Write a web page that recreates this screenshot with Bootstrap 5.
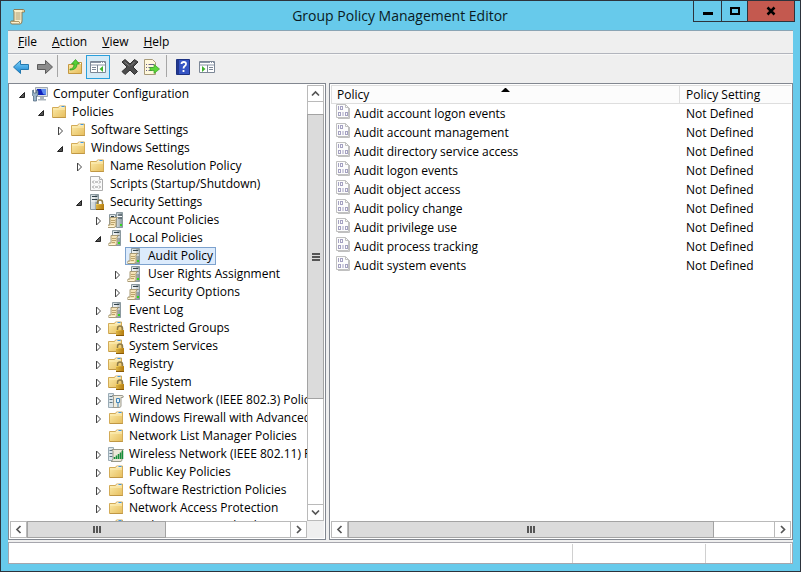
<!DOCTYPE html>
<html lang="en">
<head>
<meta charset="utf-8">
<meta name="viewport" content="width=device-width, initial-scale=1">
<title>Group Policy Management Editor</title>
<link href="https://cdn.jsdelivr.net/npm/bootstrap@5.3.0/dist/css/bootstrap.min.css" rel="stylesheet">
<style>
body{font:12px/18px "Open Sans","Noto Sans",sans-serif;color:#000}
svg{display:block;flex:none}
button{font:inherit;color:inherit}
.win{background:#67caeb;border:1px solid #2d333c;padding:0 7px 7px}
.titlebar{height:29px;padding-left:2px}
.titlebar h1{font-size:14px;line-height:29px;color:#0a1a22;padding-left:81px}
.caps{height:21px;margin-right:-2px;border:1px solid #2d333c;border-top:0}
.caps button{border:0;border-right:1px solid #2d333c;background:none;padding:0;width:28px}
.caps .max{width:26px}
.caps .quit{width:46px;background:#c4594f;border-right:0}
.client{background:#efefef;border-top:1px solid #8aa4b4}
.menus{height:23px;border-bottom:1px solid #b2b5bd;padding-left:3px;gap:1px}
.menus button{border:0;background:none;padding:0 7px;line-height:22px}
.tools{height:29px;border-top:1px solid #f8f8f8;padding-left:1px}
.tools button{width:24px;height:24px;border:1px solid transparent;background:none;padding:0}
.tools button.on{border-color:#2a9fdb;background:#d5eaf6}
.tools i{width:1px;height:22px;background:#a6a6a6}
.split{gap:3px}
.pane{border:1px solid #828790;background:#fff;padding:1px}
.side{flex:0 0 318px;min-width:0}
.tree{min-width:0}
.tree li{height:18px;padding-left:5px;white-space:nowrap}
.tree button{width:15px;height:18px;border:0;background:none;padding:0}
.tree a{color:#000;text-decoration:none;border:1px solid transparent;height:18px;padding:0 2px 0 1px;line-height:16px;gap:5px}
.tree a.sel{border-color:#7da2ce;background:#dcebfc}
.tree .leaf{padding-left:20px}
.tree .d1{margin-left:19px}.tree .d2{margin-left:38px}.tree .d3{margin-left:57px}.tree .d4{margin-left:76px}.tree .d5{margin-left:95px}
.bar{background:#fff;border:1px solid #bababa}
.bar button{border:0;background:#fff;padding:0;flex:0 0 16px}
.vbar{width:17px}
.hbar{height:17px}
.hbar button:first-child{border-right:1px solid #bababa}
.hbar button:last-child{border-left:1px solid #bababa}
.vbar button:first-child{border-bottom:1px solid #bababa}
.vbar button:last-child{border-top:1px solid #bababa}
.corner{background:#efefef}
.thumb{background:#dbdbdb;border:1px solid #a3a3a3}
.vbar .thumb{height:71%;margin:0 -1px}
.hbar .thumb{margin:-1px 0}
.vbar .lead-gap{height:12px}
.side .hbar .thumb{width:53%}
.main .hbar .thumb{width:86%}
.plist{table-layout:fixed;border-collapse:separate;border-spacing:0}
.plist th{font-weight:400;height:19px;line-height:17px;padding:0 5px;background:#fcfcfc;border:1px solid #dedede;position:relative}
.plist th+th{border-left:0;border-right:0;width:111px}
.plist td{height:19px;line-height:19px;padding:0 5px}
.plist td+td,.plist th+th{padding-left:6px}
.sorted{position:absolute;left:50%;top:2px;margin-left:-5px}
.status{height:22px;background:#fff;border:1px solid #a6a6ad;margin-top:2px;padding:1px 1px 0 0}
.status div{border-right:1px solid #d0d0d0}
.status .cell2{width:133px}.status .cell3{width:85px}
</style>
<script src="https://cdn.jsdelivr.net/npm/bootstrap@5.3.0/dist/js/bootstrap.bundle.min.js"></script>
</head>
<body>
<svg width="0" height="0" class="position-absolute" aria-hidden="true">
<defs>
<linearGradient id="gf" x1="0" y1="0" x2="1" y2="1"><stop offset="0" stop-color="#fcecab"/><stop offset="1" stop-color="#e6bd5c"/></linearGradient>
<linearGradient id="gs" x1="0" x2="1"><stop offset="0" stop-color="#d5dde0"/><stop offset="1" stop-color="#84939a"/></linearGradient>
<linearGradient id="gb" x1="0" y1="0" x2="0" y2="1"><stop offset="0" stop-color="#7fd4fa"/><stop offset="1" stop-color="#1580cf"/></linearGradient>
<linearGradient id="gl" x1="0" x2="1"><stop offset="0" stop-color="#f7d65e"/><stop offset="1" stop-color="#b9800f"/></linearGradient>
</defs>
<symbol id="open" viewBox="0 0 15 18"><path d="M9.5 7.5v5h-5z" fill="#555" stroke="#222"/></symbol>
<symbol id="shut" viewBox="0 0 15 18"><path d="M5.500 6v8L9.500 10z" fill="#fff" stroke="#444"/></symbol>
<symbol id="folder" viewBox="0 0 16 16"><path d="M1.500 3.500h6l1-1.500h6v11.500h-13z" fill="url(#gf)" stroke="#d3ab57"/><path d="M8 3.500l1-1h4.500v1z" fill="#fff"/><path d="M10.500 2h3v1h-3z" fill="#3f97e0"/><path d="M2 5h12" stroke="#fff2bd"/><path d="M2 13.500h13" stroke="#b48a38" opacity=".6"/></symbol>
<symbol id="lock" viewBox="0 0 16 16"><path d="M9.500 11V8.500a2.500 2.500 0 015 0V11" fill="none" stroke="#8f7c48" stroke-width="1.500"/><path d="M8 10h8v6H8z" fill="url(#gl)"/><path d="M8 12h8M8 14h8" stroke="#a87311" opacity=".7"/><path d="M8 15.500h8" stroke="#8a5a08"/></symbol>
<symbol id="server" viewBox="0 0 16 16"><path d="M4.500.5h8v15h-8z" fill="url(#gs)" stroke="#8b999f"/><path d="M5 1h4v14H5z" fill="#e3e9ec" opacity=".6"/><path d="M6 2.500h5M6 5.500h5" stroke="#34434b"/><path d="M5 4h7M5 7h7" stroke="#fff"/><path d="M10 12h2v2h-2z" fill="#32d91e"/></symbol>
<symbol id="scrollmini" viewBox="0 0 16 16"><path d="M3 5.500h7.500L9 7v6.500q0 2-2 2H.8L1 13h2z" fill="#f6e4b8" stroke="#a89a76"/><path d="M4 8.500h4M4 10.500h4M4 12.500h3" stroke="#bba36c"/><path d="M1 14.500h6" stroke="#fff6d8"/></symbol>
<symbol id="srvscroll" viewBox="0 0 16 16"><use href="#server"/><use href="#scrollmini"/></symbol>
<symbol id="account" viewBox="0 0 16 16"><path d="M1.500 2.500h6v12h-6z" fill="#dde4e7" stroke="#87959c"/><path d="M8.500.5h6v15h-6z" fill="url(#gs)" stroke="#8b999f"/><path d="M3 4.500h3M3 6.500h3M10 3h4M10 6h4" stroke="#34434b"/><path d="M9 4.500h5" stroke="#fff"/><path d="M12 12h2v2h-2z" fill="#32d91e"/><use href="#scrollmini" x="-1"/></symbol>
<symbol id="srvlock" viewBox="0 0 16 16"><use href="#server" x="-3"/><use href="#lock" x="-1"/></symbol>
<symbol id="flock" viewBox="0 0 16 16"><use href="#folder" x="-1"/><use href="#lock"/></symbol>
<symbol id="script" viewBox="0 0 16 16"><path d="M1.500.5h9l3 3v11h-12z" fill="#fafafa" stroke="#adadad"/><path d="M10.500.5v3h3" fill="#eee" stroke="#adadad"/><path d="M5 4.500L3.500 6 5 7.500M10 4.500L11.500 6 10 7.500M6 6h3M5 9.500L3.500 11 5 12.500M10 9.500l1.500 1.500-1.500 1.500M6 11h3" fill="none" stroke="#777" stroke-width=".8"/></symbol>
<symbol id="wired" viewBox="0 0 16 16"><path d="M.5 1.500h5v14h-5z" fill="#dce6eb" stroke="#9aabb5"/><path d="M1.500 4.500h3M1.500 7.500h3M1.500 10.500h3" stroke="#5a7380"/><path d="M4 3.500h10q2 0 1 2h-2v9q-1 1-2 1H4.500q1.500-1 1-2V5Q5 4 4 3.500z" fill="#f1ecdc" stroke="#9b9a90"/><path d="M8.500 6.500h3v4h-3zM10 10.500V15" fill="#e4f3fc" stroke="#4385b8"/></symbol>
<symbol id="wifi" viewBox="0 0 16 16"><path d="M.5 1.500h5v13h-5z" fill="#dce6eb" stroke="#9aabb5"/><path d="M1.500 4.500h3M1.500 7.500h3M1.500 10.500h3" stroke="#5a7380"/><path d="M4 3.500h11.500L14 5v9.500q-1 1-2 1H3q2-1 2-3V5z" fill="#ede8d9" stroke="#999989"/><path d="M6.500 13v-2M8.500 13v-3.500M10.500 13V8M12.500 13V6.500M14.500 13V4.500" stroke="#168e39" stroke-width="1.500"/></symbol>
<symbol id="comp" viewBox="0 0 16 16"><path d="M3.500 1.500h12v9h-12z" fill="#dbe1e6" stroke="#a0a9b1"/><path d="M5 3h9v6H5z" fill="#1022bd"/><path d="M9 3h5v6l-3-1z" fill="#5e8cf0"/><path d="M8 11h4v2H8zM6 13h8v1.500H6z" fill="#acb5bd"/><path d="M0 5v4l1.500 1v5h3v-5L6 9V5L4.500 4v3h-3V4z" fill="#9cb4c8" stroke="#465f75" stroke-width=".7"/></symbol>
<symbol id="digits" viewBox="0 0 14 16"><path d="M.5.5h9l3 3v10H.5z" fill="#fcfcfc" stroke="#c0c0c0"/><path d="M9.500.5v3H13M13.500 4v10.500H2" fill="none" stroke="#c0c0c0"/><g fill="none" stroke="#a5a2c2"><path d="M2.500 2v4"/><rect x="4.500" y="2.500" width="2" height="3"/><rect x="2.500" y="8.500" width="2" height="3"/><path d="M7 8v4"/><rect x="9.500" y="8.500" width="2" height="3"/></g></symbol>
<symbol id="cl" viewBox="0 0 15 15"><path d="M9.500 4L6 7.500 9.500 11" fill="none" stroke="#555" stroke-width="1.700"/></symbol>
<symbol id="cr" viewBox="0 0 15 15"><path d="M6 4l3.500 3.500L6 11" fill="none" stroke="#555" stroke-width="1.700"/></symbol>
<symbol id="arr" viewBox="0 0 18 16"><path d="M1.500 8L8.500 1.500v4h8v5h-8v4z"/></symbol>
<symbol id="panel" viewBox="0 0 16 16"><path d="M.5 2.500h15v11H.5z" fill="#fff" stroke="#7c8796"/><path d="M1 3.500h14M1 6h14" stroke="#8994a5"/><path d="M11 3.500h1M13 3.500h1" stroke="#fff"/></symbol>
</svg>

<div class="win vh-100 d-flex flex-column">
<header class="titlebar d-flex position-relative">
<svg class="mt-2" width="16" height="16" viewBox="0 0 16 16" aria-hidden="true"><path d="M4 .5h9q2 0 1.500 2.500H12v9q0 3-2 3H1.500q-1.500-1-.5-3h3V3q-1-2 0-2.500z" fill="#fdf1cd" stroke="#8c7a53"/><path d="M5.500 4h5M5.500 6h5M5.500 8h5M5.500 10h5" stroke="#a99a72"/><path d="M2 12.500h7l1 2" fill="none" stroke="#b09a68"/><path d="M12 1v2h2.500" fill="#e0c688"/></svg>
<h1 class="m-0 flex-fill text-center">Group Policy Management Editor</h1>
<div class="caps d-flex">
<button aria-label="Minimize"><svg width="28" height="20"><path d="M9 11h10v3H9z"/></svg></button>
<button class="max" aria-label="Maximize"><svg width="25" height="20"><path d="M9 7h8v6H9z" fill="none" stroke="#000" stroke-width="2"/></svg></button>
<button class="quit" aria-label="Close"><svg width="46" height="20"><path d="M19.500 6.500l7 7M26.500 6.500l-7 7" stroke="#000" stroke-width="2.500"/></svg></button>
</div>
</header>

<main class="client d-flex flex-column flex-fill overflow-hidden">
<nav class="menus d-flex flex-shrink-0"><button><u>F</u>ile</button><button><u>A</u>ction</button><button><u>V</u>iew</button><button><u>H</u>elp</button></nav>
<div class="tools d-flex align-items-start flex-shrink-0" role="toolbar" aria-label="Tools">
<button aria-label="Back"><svg width="18" height="22" viewBox="0 -3 18 22" class="mx-auto"><use href="#arr" width="18" height="16" fill="url(#gb)" stroke="#2478ae"/></svg></button>
<button aria-label="Forward"><svg width="18" height="22" viewBox="0 -3 18 22" class="mx-auto"><g transform="translate(18) scale(-1 1)"><use href="#arr" width="18" height="16" fill="#8b8b8b" stroke="#5b5b5b"/></g></svg></button>
<i></i>
<button class="ms-1" aria-label="Up one level"><svg class="ms-1" width="16" height="22" viewBox="0 -3 16 22"><path d="M1.500 5.500h5l1-2h7v11h-13z" fill="url(#gf)" stroke="#c49740"/><path d="M9 4h5v1H9z" fill="#fff"/><path d="M3 10q4 0 4-5H4.500L8.500.5l4 4.500H10q0 6-7 6z" fill="#57cf35" stroke="#24921a" stroke-width=".7"/></svg></button>
<button class="on" aria-label="Console tree"><svg class="mx-auto" width="16" height="22" viewBox="0 -3 16 22"><use href="#panel" width="16" height="16"/><path d="M7.500 6v7M2 8.500h4M2 10.500h4" stroke="#7c8796"/><path d="M13 7v6L9.500 10z" fill="#3fb22d"/></svg></button>
<button class="ms-2" aria-label="Delete"><svg class="mx-auto" width="18" height="22" viewBox="0 -3 18 22"><path d="M1 3l3-2.500 5 4.500 4.500-4.500L17 3l-5 5 4.500 4.500-3 3L9 11l-5 4.500-3-3L6 8z" fill="#4d4d4d" stroke="#303030"/><path d="M3.500 3l5 4M13.500 3L10 6.500" stroke="#858585"/></svg></button>
<button aria-label="Export list"><svg width="17" height="22" viewBox="0 -3 17 22"><path d="M1.500.5h8l3 3v12h-11z" fill="#fff8dc" stroke="#a79a79"/><path d="M3 5.500h1M3 8.500h1M3 11.500h1M5.500 5.500H11M5.500 8.500H10M5.500 11.500H9" stroke="#68608c"/><path d="M7 8.500h4v-3l5.500 4.500-5.500 4.500v-3H7z" fill="#5dd63a" stroke="#36a222" stroke-width=".7"/></svg></button>
<i></i>
<button class="ms-1" aria-label="Help"><svg class="mx-auto" width="14" height="22" viewBox="0 -3 14 22"><path d="M.5.5h13v15H.5z" fill="#3655c4" stroke="#1d3282"/><path d="M1 1h2v14H1z" fill="#22388f"/><path d="M5.500 5q0-2 2.300-2T10 5q0 1.200-1.200 2T7.500 9.500M7.500 11v2" fill="none" stroke="#fff" stroke-width="1.800"/></svg></button>
<button aria-label="Action pane"><svg class="mx-auto" width="16" height="22" viewBox="0 -3 16 22"><use href="#panel" width="16" height="16"/><path d="M8.500 6v7M10 8.500h4M10 10.500h4" stroke="#7c8796"/><path d="M3 7v6l3.500-3z" fill="#3fb22d"/></svg></button>
</div>

<div class="split d-flex flex-fill overflow-hidden">
<section class="pane side d-flex flex-column" aria-label="Console tree">
<div class="d-flex flex-fill overflow-hidden">
<ul class="tree list-unstyled m-0 flex-fill overflow-hidden" id="tree"></ul>
<div class="bar vbar d-flex flex-column flex-shrink-0">
<button aria-label="Scroll up"><svg width="15" height="15"><path d="M4 9.500L7.500 6 11 9.500" fill="none" stroke="#555" stroke-width="1.700"/></svg></button>
<div class="flex-fill"><div class="lead-gap"></div><div class="thumb d-flex align-items-center justify-content-center"><svg width="8" height="8"><path d="M0 1h8M0 4h8M0 7h8" stroke="#555" stroke-width="2"/></svg></div></div>
<button aria-label="Scroll down"><svg width="15" height="15"><path d="M4 5.500L7.500 9 11 5.500" fill="none" stroke="#555" stroke-width="1.700"/></svg></button>
</div>
</div>
<div class="d-flex flex-shrink-0"><div class="bar hbar d-flex flex-fill">
<button aria-label="Scroll left"><svg width="15" height="15"><use href="#cl"/></svg></button>
<div class="d-flex flex-fill"><div class="thumb d-flex align-items-center justify-content-center"><svg width="8" height="7"><path d="M1 0v7M4 0v7M7 0v7" stroke="#555" stroke-width="2"/></svg></div></div>
<button aria-label="Scroll right"><svg width="15" height="15"><use href="#cr"/></svg></button>
</div><div class="vbar corner"></div></div>
</section>

<section class="pane main d-flex flex-column flex-fill overflow-hidden" aria-label="Policies">
<div class="flex-fill overflow-hidden">
<table class="plist w-100"><thead><tr><th scope="col">Policy<svg class="sorted" width="9" height="5"><path d="M4 0h1l4 4H0z"/></svg></th><th scope="col">Policy Setting</th></tr></thead><tbody id="rows"></tbody></table>
</div>
<div class="bar hbar d-flex flex-shrink-0">
<button aria-label="Scroll left"><svg width="15" height="15"><use href="#cl"/></svg></button>
<div class="d-flex flex-fill"><div class="thumb d-flex align-items-center justify-content-center"><svg width="8" height="7"><path d="M1 0v7M4 0v7M7 0v7" stroke="#555" stroke-width="2"/></svg></div></div>
<button aria-label="Scroll right"><svg width="15" height="15"><use href="#cr"/></svg></button>
</div>
</section>
</div>
<footer class="status d-flex flex-shrink-0"><div class="flex-fill"></div><div class="cell2"></div><div class="cell3"></div></footer>
</main>
</div>
<script>
// depth, toggle state (open / shut / none), icon, label
const nodes = [
[0,'open','comp','Computer Configuration'],[1,'open','folder','Policies'],[2,'shut','folder','Software Settings'],
[2,'open','folder','Windows Settings'],[3,'shut','folder','Name Resolution Policy'],[3,'','script','Scripts (Startup/Shutdown)'],
[3,'open','srvlock','Security Settings'],[4,'shut','account','Account Policies'],[4,'open','srvscroll','Local Policies'],
[5,'','srvscroll','Audit Policy'],[5,'shut','srvscroll','User Rights Assignment'],[5,'shut','srvscroll','Security Options'],
[4,'shut','srvscroll','Event Log'],[4,'shut','flock','Restricted Groups'],[4,'shut','flock','System Services'],
[4,'shut','flock','Registry'],[4,'shut','flock','File System'],[4,'shut','wired','Wired Network (IEEE 802.3) Policies'],
[4,'shut','folder','Windows Firewall with Advanced Security'],[4,'','folder','Network List Manager Policies'],
[4,'shut','wifi','Wireless Network (IEEE 802.11) Policies'],[4,'shut','folder','Public Key Policies'],
[4,'shut','folder','Software Restriction Policies'],[4,'shut','folder','Network Access Protection'],
[4,'shut','folder','Application Control Policies']];
document.getElementById('tree').innerHTML = nodes.map(([d,t,i,s]) =>
`<li class="d-flex d${d} ${t?'':'leaf'}">${t?`<button class="flex-shrink-0" aria-label="Toggle ${s}"><svg width="15" height="18"><use href="#${t}"/></svg></button>`:''}<a href="#" class="d-flex ${s==='Audit Policy'?'sel':''}"><svg width="16" height="16"><use href="#${i}"/></svg>${s}</a></li>`).join('');
const audits = ['account logon events','account management','directory service access','logon events','object access','policy change','privilege use','process tracking','system events'];
document.getElementById('rows').innerHTML = audits.map(a =>
`<tr><td><div class="d-flex"><svg class="me-1" width="14" height="16"><use href="#digits"/></svg>Audit ${a}</div></td><td>Not Defined</td></tr>`).join('');
</script>
</body>
</html>
